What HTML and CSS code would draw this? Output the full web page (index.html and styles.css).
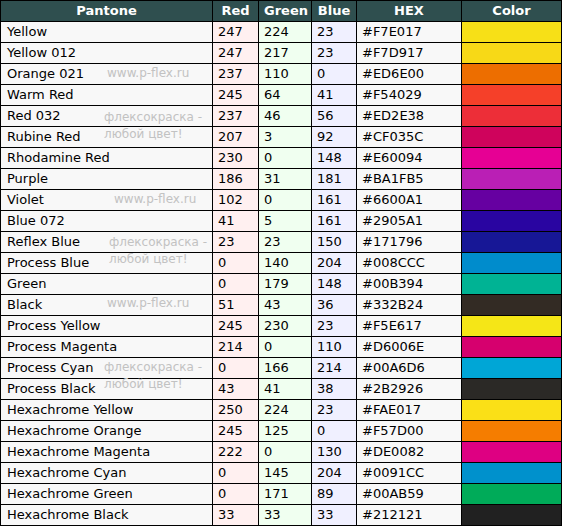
FILE: index.html
```html
<!DOCTYPE html>
<html>
<head>
<meta charset="utf-8">
<link rel="stylesheet" href="styles.css">
</head>
<body>
<div class="wrap">
<table class="pantone">
<colgroup>
<col class="c-name"><col class="c-r"><col class="c-g"><col class="c-b"><col class="c-hex"><col class="c-sw">
</colgroup>
<thead>
<tr><th>Pantone</th><th>Red</th><th>Green</th><th>Blue</th><th>HEX</th><th>Color</th></tr>
</thead>
<tbody id="rows">
<tr><td class="n">Yellow</td><td class="r">247</td><td class="g">224</td><td class="b">23</td><td class="h">#F7E017</td><td style="background:#F7E017"></td></tr>
<tr><td class="n">Yellow 012</td><td class="r">247</td><td class="g">217</td><td class="b">23</td><td class="h">#F7D917</td><td style="background:#F7D917"></td></tr>
<tr><td class="n">Orange 021</td><td class="r">237</td><td class="g">110</td><td class="b">0</td><td class="h">#ED6E00</td><td style="background:#ED6E00"></td></tr>
<tr><td class="n">Warm Red</td><td class="r">245</td><td class="g">64</td><td class="b">41</td><td class="h">#F54029</td><td style="background:#F54029"></td></tr>
<tr><td class="n">Red 032</td><td class="r">237</td><td class="g">46</td><td class="b">56</td><td class="h">#ED2E38</td><td style="background:#ED2E38"></td></tr>
<tr><td class="n">Rubine Red</td><td class="r">207</td><td class="g">3</td><td class="b">92</td><td class="h">#CF035C</td><td style="background:#CF035C"></td></tr>
<tr><td class="n">Rhodamine Red</td><td class="r">230</td><td class="g">0</td><td class="b">148</td><td class="h">#E60094</td><td style="background:#E60094"></td></tr>
<tr><td class="n">Purple</td><td class="r">186</td><td class="g">31</td><td class="b">181</td><td class="h">#BA1FB5</td><td style="background:#BA1FB5"></td></tr>
<tr><td class="n">Violet</td><td class="r">102</td><td class="g">0</td><td class="b">161</td><td class="h">#6600A1</td><td style="background:#6600A1"></td></tr>
<tr><td class="n">Blue 072</td><td class="r">41</td><td class="g">5</td><td class="b">161</td><td class="h">#2905A1</td><td style="background:#2905A1"></td></tr>
<tr><td class="n">Reflex Blue</td><td class="r">23</td><td class="g">23</td><td class="b">150</td><td class="h">#171796</td><td style="background:#171796"></td></tr>
<tr><td class="n">Process Blue</td><td class="r">0</td><td class="g">140</td><td class="b">204</td><td class="h">#008CCC</td><td style="background:#008CCC"></td></tr>
<tr><td class="n">Green</td><td class="r">0</td><td class="g">179</td><td class="b">148</td><td class="h">#00B394</td><td style="background:#00B394"></td></tr>
<tr><td class="n">Black</td><td class="r">51</td><td class="g">43</td><td class="b">36</td><td class="h">#332B24</td><td style="background:#332B24"></td></tr>
<tr><td class="n">Process Yellow</td><td class="r">245</td><td class="g">230</td><td class="b">23</td><td class="h">#F5E617</td><td style="background:#F5E617"></td></tr>
<tr><td class="n">Process Magenta</td><td class="r">214</td><td class="g">0</td><td class="b">110</td><td class="h">#D6006E</td><td style="background:#D6006E"></td></tr>
<tr><td class="n">Process Cyan</td><td class="r">0</td><td class="g">166</td><td class="b">214</td><td class="h">#00A6D6</td><td style="background:#00A6D6"></td></tr>
<tr><td class="n">Process Black</td><td class="r">43</td><td class="g">41</td><td class="b">38</td><td class="h">#2B2926</td><td style="background:#2B2926"></td></tr>
<tr><td class="n">Hexachrome Yellow</td><td class="r">250</td><td class="g">224</td><td class="b">23</td><td class="h">#FAE017</td><td style="background:#FAE017"></td></tr>
<tr><td class="n">Hexachrome Orange</td><td class="r">245</td><td class="g">125</td><td class="b">0</td><td class="h">#F57D00</td><td style="background:#F57D00"></td></tr>
<tr><td class="n">Hexachrome Magenta</td><td class="r">222</td><td class="g">0</td><td class="b">130</td><td class="h">#DE0082</td><td style="background:#DE0082"></td></tr>
<tr><td class="n">Hexachrome Cyan</td><td class="r">0</td><td class="g">145</td><td class="b">204</td><td class="h">#0091CC</td><td style="background:#0091CC"></td></tr>
<tr><td class="n">Hexachrome Green</td><td class="r">0</td><td class="g">171</td><td class="b">89</td><td class="h">#00AB59</td><td style="background:#00AB59"></td></tr>
<tr><td class="n">Hexachrome Black</td><td class="r">33</td><td class="g">33</td><td class="b">33</td><td class="h">#212121</td><td style="background:#212121"></td></tr>
</tbody>
</table>
<div class="wm wm-url wm1">www.p-flex.ru</div>
<div class="wm wm-txt wm2">флексокраска -<br>любой цвет!</div>
<div class="wm wm-url wm3">www.p-flex.ru</div>
<div class="wm wm-txt wm4">флексокраска -<br>любой цвет!</div>
<div class="wm wm-url wm5">www.p-flex.ru</div>
<div class="wm wm-txt wm6">флексокраска -<br>любой цвет!</div>
</div>
</body>
</html>
```

FILE: styles.css
```css
html, body {
  margin: 0;
  padding: 0;
  background: #ffffff;
}

.wrap {
  position: relative;
  width: 562px;
}

.pantone {
  border-collapse: collapse;
  table-layout: fixed;
  width: 562px;
  font-family: "DejaVu Sans", Verdana, sans-serif;
  font-size: 13px;
  color: #000000;
}

.c-name { width: 212px; }
.c-r { width: 46px; }
.c-g { width: 53px; }
.c-b { width: 45px; }
.c-hex { width: 105px; }
.c-sw { width: 100px; }

.pantone th,
.pantone td {
  border: 1px solid #000000;
  height: 20px;
  padding: 0 5px;
  line-height: 20px;
  white-space: nowrap;
  overflow: hidden;
}

.pantone th {
  background: #2f4f4f;
  color: #ffffff;
  font-weight: bold;
  text-align: center;
}

.pantone td {
  text-align: left;
}

.pantone .n { background: #f8f8f8; padding-left: 6px; }
.pantone .r { background: #fff0f0; }
.pantone .g { background: #f0fff0; }
.pantone .b { background: #f0f0ff; }
.pantone .h { background: #f8f8f8; }

.wm {
  position: absolute;
  font-family: "DejaVu Sans", Verdana, sans-serif;
  font-size: 12px;
  color: #c2c2c2;
  white-space: nowrap;
  pointer-events: none;
}

.wm-txt {
  line-height: 17px;
}

.wm1 { left: 107px; top: 66px; }
.wm2 { left: 104px; top: 109px; }
.wm3 { left: 114px; top: 192px; }
.wm4 { left: 109px; top: 234px; }
.wm5 { left: 107px; top: 296px; }
.wm6 { left: 104px; top: 359px; }
```
